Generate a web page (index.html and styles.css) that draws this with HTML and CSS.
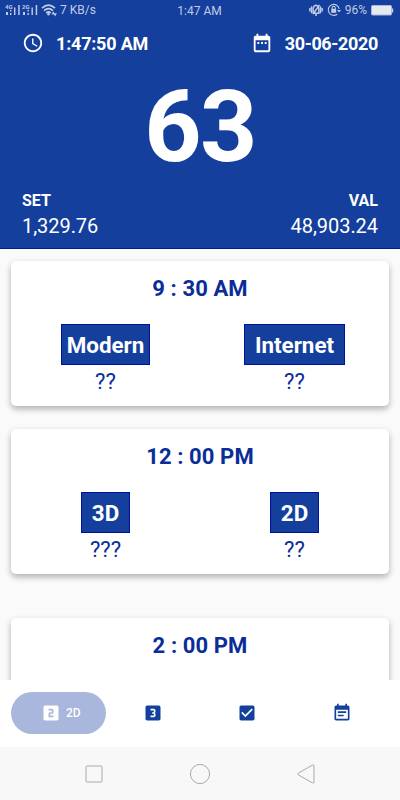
FILE: index.html
```html
<!DOCTYPE html>
<html lang="en">
  <head>
    <meta charset="UTF-8" />
    <meta name="viewport" content="width=device-width, initial-scale=1.0" />
    <title>2D 3D</title>
    <link rel="stylesheet" href="styles.css">
  </head>
  <body>
    <div class="screen">
      <header class="header">
        <div class="status-bar">
          <div class="status-left">
            <svg class="signal" width="52" height="14" viewBox="0 0 52 14" fill="currentColor">
              <text class="net" x="0" y="5.5">4G</text>
              <path d="M1 9h2v3H1zM5 7h1.4v1.6H5zM5 10h1.4v2H5zM9 4.5h1.4V12H9zM13.2 2h1.5v10h-1.5z" />
              <text class="net" x="17" y="5.5">2G</text>
              <path d="M18 9h2v3h-2zM22.5 7h1.4v1.6h-1.4zM22.5 10h1.4v2h-1.4zM26.5 4.5h1.4V12h-1.4zM30.7 2h1.5v10h-1.5z" />
              <g fill="none" stroke="currentColor" stroke-width="1.7">
                <path d="M37 5.2q6.5-6 13 0M39 7.7q4.5-4 9 0M41.2 10q2.3-2 4.6 0" />
              </g>
              <circle cx="43.5" cy="11.2" r="1.2" />
              <path d="M46.5 11.5l1.9-3.2 1.6 3.2zM48.5 10.2h3.4l-1.7 3.2z" />
            </svg>
            <span>7 KB/s</span>
          </div>
          <div class="status-time">1:47 AM</div>
          <div class="status-right">
            <svg width="14" height="14" viewBox="0 0 14 14" fill="none" stroke="currentColor" stroke-width="1.4">
              <path d="M.8 5v3.5M2.5 3.2v7M11.5 3.2v7M13.2 5v3.5M4.2 10.2V5.5Q4.5 2.8 7 2.3q2.5.5 2.8 3.2v4.7zM6 12h2M4 11l6.5-9" />
            </svg>
            <svg width="14" height="14" viewBox="0 0 14 14" fill="none" stroke="currentColor" stroke-width="1.1">
              <path d="M10.2 11.2a5.5 5.5 0 1 1 2-5.2" />
              <path d="M10 7h4l-2 2.5z" fill="currentColor" stroke="none" />
              <path d="M5.2 6V4.8a1.5 1.5 0 0 1 3 0V6" />
              <path d="M4.2 5.8h5v4h-5z" fill="currentColor" stroke="none" />
            </svg>
            <span>96%</span>
            <svg width="23" height="11" viewBox="0 0 23 11">
              <rect x=".5" y=".5" width="20" height="9.5" rx="1" fill="#e6e9f3" stroke="#a9b7da" />
              <path d="M21 3.5h1.2v4H21z" fill="#c5cee6" />
            </svg>
          </div>
        </div>

        <div class="datetime">
          <div class="datetime-item">
            <svg width="22" height="22" viewBox="0 0 24 24" fill="#fff">
              <path d="M11.99 2C6.47 2 2 6.48 2 12s4.47 10 9.99 10C17.52 22 22 17.52 22 12S17.52 2 11.99 2zM12 20c-4.42 0-8-3.58-8-8s3.58-8 8-8 8 3.58 8 8-3.58 8-8 8zm.5-13H11v6l5.25 3.15.75-1.23-4.5-2.67z" />
            </svg>
            <span>1:47:50 AM</span>
          </div>
          <div class="datetime-item date">
            <svg width="22" height="22" viewBox="0 0 24 24" fill="#fff">
              <path d="M9 11H7v2h2v-2zm4 0h-2v2h2v-2zm4 0h-2v2h2v-2zm2-7h-1V2h-2v2H8V2H6v2H5c-1.11 0-1.99.9-1.99 2L3 20c0 1.1.89 2 2 2h14c1.1 0 2-.9 2-2V6c0-1.1-.9-2-2-2zm0 16H5V9h14v11z" />
            </svg>
            <span>30-06-2020</span>
          </div>
        </div>

        <div class="live">63</div>

        <div class="stats">
          <div class="stat">
            <div class="stat-label">SET</div>
            <div class="stat-value">1,329.76</div>
          </div>
          <div class="stat stat-end">
            <div class="stat-label">VAL</div>
            <div class="stat-value">48,903.24</div>
          </div>
        </div>
      </header>

      <main class="content">
        <section class="card">
          <h2 class="card-title">9 : 30 AM</h2>
          <div class="results">
            <div class="result">
              <span class="tag tag-modern">Modern</span>
              <span class="number">??</span>
            </div>
            <div class="result">
              <span class="tag">Internet</span>
              <span class="number">??</span>
            </div>
          </div>
        </section>

        <section class="card">
          <h2 class="card-title">12 : 00 PM</h2>
          <div class="results">
            <div class="result">
              <span class="tag">3D</span>
              <span class="number">???</span>
            </div>
            <div class="result">
              <span class="tag">2D</span>
              <span class="number">??</span>
            </div>
          </div>
        </section>

        <section class="card card-next">
          <h2 class="card-title">2 : 00 PM</h2>
        </section>
      </main>

      <nav class="tabs">
        <a class="tab active">
          <svg width="20" height="20" viewBox="0 0 24 24" fill="currentColor">
            <path d="M19 3H5c-1.1 0-2 .9-2 2v14c0 1.1.9 2 2 2h14c1.1 0 2-.9 2-2V5c0-1.1-.9-2-2-2zm-4 8c0 1.11-.9 2-2 2h-2v2h4v2H9v-4c0-1.11.9-2 2-2h2V9H9V7h4c1.1 0 2 .89 2 2v2z" />
          </svg>
          <span>2D</span>
        </a>
        <a class="tab">
          <svg width="20" height="20" viewBox="0 0 24 24" fill="currentColor">
            <path d="M19 3H5c-1.1 0-2 .9-2 2v14c0 1.1.9 2 2 2h14c1.1 0 2-.9 2-2V5c0-1.1-.9-2-2-2zm-4 7.5c0 .83-.67 1.5-1.5 1.5.83 0 1.5.67 1.5 1.5V15c0 1.11-.9 2-2 2H9v-2h4v-2h-2v-2h2V9H9V7h4c1.1 0 2 .89 2 2v1.5z" />
          </svg>
        </a>
        <a class="tab">
          <svg width="20" height="20" viewBox="0 0 24 24" fill="currentColor">
            <path d="M19 3H5c-1.11 0-2 .9-2 2v14c0 1.1.89 2 2 2h14c1.11 0 2-.9 2-2V5c0-1.1-.89-2-2-2zm-9 14l-5-5 1.41-1.41L10 14.17l7.59-7.59L19 8l-9 9z" />
          </svg>
        </a>
        <a class="tab">
          <svg width="20" height="20" viewBox="0 0 24 24" fill="currentColor">
            <path d="M17 10H7v2h10v-2zm2-7h-1V1h-2v2H8V1H6v2H5c-1.11 0-1.99.9-1.99 2L3 19c0 1.1.89 2 2 2h14c1.1 0 2-.9 2-2V5c0-1.1-.9-2-2-2zm0 16H5V8h14v11zm-5-5H7v2h7v-2z" />
          </svg>
        </a>
      </nav>

      <div class="system-nav">
        <svg width="22" height="22" viewBox="0 0 22 22">
          <rect x="3" y="3" width="16" height="16" rx="1" />
        </svg>
        <svg width="22" height="22" viewBox="0 0 22 22">
          <circle cx="11" cy="11" r="9.6" />
        </svg>
        <svg width="22" height="22" viewBox="0 0 22 22">
          <path d="M17.6 2L3.5 10q-1.5 1 0 2l14.1 8q1.4.5 1.4-1V3q0-1.5-1.4-1z" />
        </svg>
      </div>
    </div>
  </body>
</html>
```
FILE: styles.css
```css
* {
  box-sizing: border-box;
}
body {
  margin: 0;
  font-family: Roboto, sans-serif;
  background-color: #fafafa;
}
.screen {
  display: flex;
  flex-direction: column;
  height: 800px;
  overflow: hidden;
}
.header {
  height: 249px;
  flex-shrink: 0;
  background-color: #143f9c;
  border-bottom: 1px solid #001c95;
  color: #fff;
}
.status-bar {
  display: grid;
  grid-template-columns: 1fr auto 1fr;
  align-items: center;
  height: 20px;
  padding: 0 6px 0 5px;
  font-size: 12px;
  color: #c0cbe5;
}
.status-time {
  padding-top: 1px;
}
.status-left,
.status-right {
  display: flex;
  align-items: center;
}
.status-left {
  gap: 3px;
}
.status-right {
  justify-content: flex-end;
  gap: 4px;
}
.net {
  font-size: 6px;
  font-weight: bold;
}
.datetime {
  display: flex;
  justify-content: space-between;
  height: 46px;
  padding: 0 22px;
}
.datetime-item {
  display: flex;
  align-items: center;
  gap: 12px;
  font-size: 18px;
  font-weight: bold;
  letter-spacing: -0.2px;
}
.date {
  letter-spacing: -0.35px;
}
.live {
  height: 121px;
  line-height: 121px;
  text-align: center;
  font-size: 100px;
  font-weight: bold;
  letter-spacing: -1.5px;
}
.stats {
  display: flex;
  justify-content: space-between;
  padding: 3px 22px 0;
}
.stat-end {
  text-align: right;
}
.stat-label {
  font-size: 16px;
  font-weight: bold;
  line-height: 22px;
}
.stat-value {
  font-size: 20px;
  line-height: 28px;
  letter-spacing: -0.05px;
}
.content {
  flex: 1;
  min-height: 0;
  overflow: hidden;
  padding: 12px 11px 0;
}
.card {
  height: 145px;
  margin-bottom: 23px;
  padding-top: 14px;
  background-color: #fff;
  border-radius: 5px;
  box-shadow: 0 3px 6px rgba(0, 0, 0, 0.3);
  text-align: center;
  color: #0a2d98;
}
.card-next {
  margin-top: 44px;
}
.card-title {
  margin: 0;
  font-size: 22px;
  line-height: 28px;
  letter-spacing: 0.1px;
}
.results {
  display: flex;
  margin-top: 21px;
}
.result {
  flex: 1;
  display: flex;
  flex-direction: column;
  align-items: center;
}
.tag {
  height: 41px;
  padding: 0 10px;
  border: 1px solid #00109a;
  background-color: #143f9c;
  color: #fff;
  font-size: 22.4px;
  font-weight: bold;
  line-height: 41px;
}
.tag-modern {
  padding: 0 5px;
}
.number {
  font-size: 22px;
  line-height: 34px;
}
.tabs {
  display: flex;
  align-items: center;
  height: 67px;
  flex-shrink: 0;
  padding: 0 11px 1px;
  background-color: #fff;
  color: #143f9c;
}
.tab {
  width: 25%;
  display: flex;
  align-items: center;
  justify-content: center;
  gap: 5px;
  height: 42px;
  border-radius: 21px;
  font-size: 12px;
  font-weight: 500;
}
.tab.active {
  padding-left: 5px;
  background-color: #a8b7db;
  color: #fff;
}
.system-nav {
  display: flex;
  align-items: center;
  justify-content: center;
  gap: 84px;
  height: 53px;
  flex-shrink: 0;
  background-color: #f8f8f8;
}
.system-nav svg {
  fill: none;
  stroke: #aaa;
  stroke-width: 1;
}
```
